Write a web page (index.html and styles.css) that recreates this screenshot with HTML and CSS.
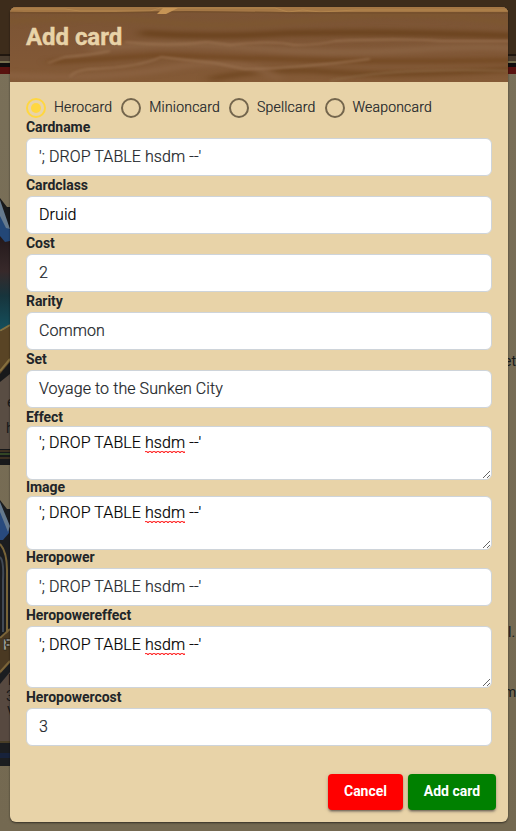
FILE: index.html
```html
<!DOCTYPE html>
<html lang="en">
<head>
<meta charset="utf-8">
<title>Add card</title>
<link rel="stylesheet" href="styles.css">
</head>
<body>
<svg class="backdrop" viewBox="0 0 516 831" aria-hidden="true">
  <defs>
    <linearGradient id="stone" x1="0" y1="0" x2="0" y2="1"><stop offset="0" stop-color="#7a7059"/><stop offset="1" stop-color="#746951"/></linearGradient>
    <linearGradient id="art" x1="0" y1="0" x2="0" y2="1"><stop offset="0" stop-color="#211719"/><stop offset=".4" stop-color="#37292a"/><stop offset=".65" stop-color="#17343c"/><stop offset="1" stop-color="#14505d"/></linearGradient>
  </defs>
  <rect width="516" height="831" fill="url(#stone)"/>
  <rect width="516" height="54" fill="#3d2c1b"/>
  <rect y="54" width="516" height="2" fill="#21170f"/>
  <rect y="56" width="516" height="5" fill="#493b2d"/>
  <rect y="61" width="516" height="2" fill="#77704f"/>
  <rect y="63" width="516" height="4" fill="#100d0d"/>
  <rect y="67" width="516" height="7" fill="#59120f"/>
  <path d="M0 198L7 207H10V465H0Z" fill="#18191b"/>
  <path d="M0 232H10V330H0Z" fill="url(#art)"/>
  <path d="M0 205L10 230V241L5 242L0 236Z" fill="#234777"/>
  <path d="M0 200L10 229L6 228L0 216Z" fill="#65798d"/>
  <path d="M0 332L10 326V362L0 374Z" fill="#594425"/>
  <path d="M0 331L10 325M0 371L10 359" stroke="#86703f" stroke-width="2"/>
  <path d="M0 382L10 374V449H0Z" fill="#594d43"/>
  <path d="M0 454H10" stroke="#334625" stroke-width="2"/>
  <path d="M0 451H10M0 458H10" stroke="#624b29"/>
  <path d="M0 500L7 509H10V766H0Z" fill="#1b1d20"/>
  <path d="M0 510L9 526V533L3 540H0Z" fill="#284a7d"/>
  <path d="M0 502L10 526L8 532L0 512Z" fill="#65798d"/>
  <path d="M0 544Q7 552 7 570V636" fill="none" stroke="#786438" stroke-width="2"/>
  <path d="M0 557Q4 561 3 580V632" fill="none" stroke="#414954" stroke-width="2"/>
  <path d="M0 639L10 630V663L0 674Z" fill="#4a3922"/>
  <path d="M0 638L10 629M0 672L10 661" stroke="#7b6439" stroke-width="2"/>
  <path d="M0 684L10 672V741H0Z" fill="#574940"/>
  <path d="M0 742H10" stroke="#79602e"/>
  <path d="M0 753H10V758H0Z" fill="#17223b"/>
  <g class="card-text">
    <text x="7" y="407">e</text><text x="6" y="433">h</text>
    <text x="8" y="685">l</text><text x="6" y="701">3</text><text x="7" y="717">V</text>
    <text x="504" y="366">et</text><text x="508" y="637">l.</text><text x="504" y="697">m</text>
  </g>
  <text class="card-title" x="3" y="650">F</text>
</svg>

<main class="dialog">
  <header class="dialog-header">
    <svg class="wood" viewBox="0 0 498 75" preserveAspectRatio="none" aria-hidden="true">
      <defs>
        <linearGradient id="wood" x1="0" y1="0" x2="0" y2="1"><stop offset="0" stop-color="#7b5434"/><stop offset=".6" stop-color="#805736"/><stop offset="1" stop-color="#845a36"/></linearGradient>
        <filter id="soft" filterUnits="userSpaceOnUse" x="-20" y="-20" width="540" height="120" color-interpolation-filters="sRGB"><feGaussianBlur stdDeviation="6 2.2"/></filter>
        <filter id="fine" filterUnits="userSpaceOnUse" x="-20" y="-20" width="540" height="120" color-interpolation-filters="sRGB"><feGaussianBlur stdDeviation="1.5 .8"/></filter>
      </defs>
      <rect width="498" height="75" fill="url(#wood)"/>
      <g fill="none" filter="url(#soft)">
        <path d="M-10 15Q90 8 150 15T310 12T508 17" stroke="#7d5730" stroke-width="5"/>
        <path d="M130 26Q200 31 280 26Q390 24 508 29" stroke="#6b431e" stroke-width="6"/>
        <path d="M80 42Q160 34 240 41T400 43T508 42" stroke="#896242" stroke-width="6"/>
        <path d="M40 55Q80 53 150 48Q220 51 300 53T508 53" stroke="#71461f" stroke-width="4"/>
        <path d="M200 72Q260 60 320 65T508 62" stroke="#704721" stroke-width="5"/>
        <path d="M-10 68Q90 74 160 61T270 72" stroke="#8a6140" stroke-width="6"/>
      </g>
      <g fill="none" filter="url(#fine)" stroke="#98714f" stroke-width="1.8" stroke-opacity=".8">
        <path d="M115 35Q160 40 197 35L220 38Q260 33 285 38Q310 38 325 34Q390 31 430 34L508 34"/>
        <path d="M60 70Q64 63 83 62Q130 60 151 50Q175 53 205 56L234 62Q280 62 360 52"/>
        <path d="M38 56L55 50Q80 48 100 44"/>
        <path d="M320 74Q380 60 508 64" stroke="#8b6643"/>
      </g>
      <rect width="498" height="5" fill="#a47745"/>
      <path d="M0 2H55L70 4H140L150 1H265L278 5L293 3L310 5L345 3H498" fill="none" stroke="#b98b51" stroke-opacity=".7"/>
      <path d="M0 5.5Q60 7 120 5.5T280 6H498" fill="none" stroke="#75502d" stroke-width="1.5"/>
      <path d="M153 1H168L156 7H147L150 4Z" fill="#c69455"/>
    </svg>
    <h1 class="title">Add card</h1>
  </header>

  <form class="form">
    <div class="types">
      <label class="type"><span class="radio radio-on"></span>Herocard</label>
      <label class="type"><span class="radio"></span>Minioncard</label>
      <label class="type"><span class="radio"></span>Spellcard</label>
      <label class="type"><span class="radio"></span>Weaponcard</label>
    </div>
    <div class="label">Cardname</div><div class="input">'; DROP TABLE hsdm --'</div>
    <div class="label">Cardclass</div><div class="input dark">Druid</div>
    <div class="label">Cost</div><div class="input">2</div>
    <div class="label">Rarity</div><div class="input">Common</div>
    <div class="label">Set</div><div class="input">Voyage to the Sunken City</div>
    <div class="label">Effect</div><div class="input area">'; DROP TABLE <span class="misspelt">hsdm</span> --'</div>
    <div class="label tight">Image</div><div class="input area">'; DROP TABLE <span class="misspelt">hsdm</span> --'</div>
    <div class="label tight">Heropower</div><div class="input">'; DROP TABLE hsdm --'</div>
    <div class="label">Heropowereffect</div><div class="input area roomy">'; DROP TABLE <span class="misspelt">hsdm</span> --'</div>
    <div class="label">Heropowercost</div><div class="input">3</div>
  </form>

  <footer class="actions">
    <button class="button cancel" type="button">Cancel</button>
    <button class="button add" type="button">Add card</button>
  </footer>
</main>
</body>
</html>
```
FILE: styles.css
```css
* { box-sizing: border-box; }
body {
  margin: 0;
  padding: 7px 8px 0 10px;
  height: 831px;
  overflow: hidden;
  font-family: Roboto, "Liberation Sans", sans-serif;
  color: #212529;
}
.backdrop { position: absolute; inset: 0; width: 516px; height: 831px; }
.card-text { font: 400 14px Roboto, sans-serif; fill: #181a1b; }
.card-title { font: 900 14px Roboto, sans-serif; fill: #b0aaa0; stroke: #111; stroke-width: .5; }
.dialog {
  position: relative;
  display: flex;
  flex-direction: column;
  height: 815px;
  border-radius: 6px;
  overflow: hidden;
  background: #e8d3a8;
  box-shadow: 0 1px 2px #0008;
}
.dialog-header { position: relative; height: 75px; flex: none; padding: 14px 16px; }
.wood { position: absolute; inset: 0; width: 100%; height: 100%; }
.title {
  position: relative;
  margin: 0;
  font-size: 24px;
  font-weight: 700;
  line-height: 32px;
  letter-spacing: -.05px;
  -webkit-text-stroke: .4px #e8d3a8;
  color: #e8d3a8;
}
.form {
  display: grid;
  grid-template-rows: 36px 20px 38px 20px 38px 20px 38px 20px 38px 20px 38px 18px 54px 16px 54px 18px 38px 20px 62px 20px 38px;
  padding: 0 16px;
}
.types { display: flex; gap: 9px; padding-top: 15px; }
.type {
  display: flex;
  height: 20px;
  gap: 8px;
  font-size: 14px;
  font-weight: 300;
  line-height: 20px;
  letter-spacing: .2px;
  -webkit-text-stroke: .2px;
}
.radio {
  display: flex;
  align-items: center;
  justify-content: center;
  width: 20px;
  height: 20px;
  margin-top: 1px;
  border: 2px solid #74664d;
  border-radius: 50%;
}
.radio-on { border-color: #ffd740; }
.radio-on::after { content: ""; width: 10px; height: 10px; border-radius: 50%; background: #ffd740; }
.label { margin-top: -1px; font-size: 14px; font-weight: 700; line-height: 20px; letter-spacing: -.05px; white-space: nowrap; }
.tight { margin-top: -3px; }
.input {
  width: 466px;
  padding: 6px 12px;
  border: 1px solid #ced4da;
  border-radius: 6px;
  background: #fff;
  font-size: 16px;
  font-weight: 300;
  line-height: 24px;
  letter-spacing: .08px;
  -webkit-text-stroke: .2px;
  white-space: nowrap;
}
.dark { color: #000; }
.area { padding-top: 4px; color: #000; overflow: auto; resize: vertical; }
.roomy { padding-top: 6px; }
.misspelt {
  padding-bottom: 1px;
  background:
    repeating-linear-gradient(90deg, #f33 0 2px, #f338 2px 4px) 0 calc(100% - 1px) / 100% 1px no-repeat,
    repeating-linear-gradient(90deg, #f332 0 2px, #f33 2px 4px) 0 100% / 100% 1px no-repeat;
}
.actions { display: flex; gap: 5px; justify-content: flex-end; margin-top: 28px; padding-right: 12px; }
.button {
  height: 36px;
  padding: 0;
  border: 0;
  border-radius: 4px;
  font: 700 14px/35px Roboto, sans-serif;
  color: #fff;
  box-shadow: 0 3px 1px -2px #0003, 0 2px 2px #0024, 0 1px 5px #0002;
}
.cancel { width: 75px; padding-bottom: 2px; background: red; }
.add { width: 88px; padding-bottom: 2px; background: green; }
```
